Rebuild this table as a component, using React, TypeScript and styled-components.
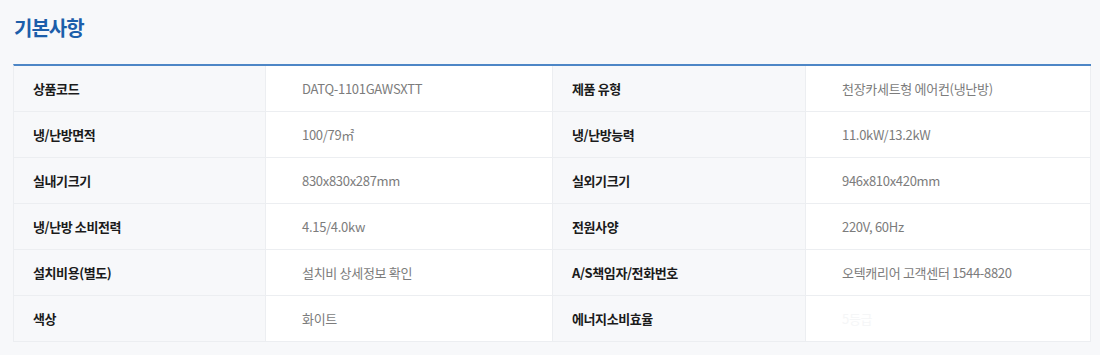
import styled, { createGlobalStyle } from "styled-components";

const GlobalStyle = createGlobalStyle`
  html, body {
    margin: 0;
    padding: 0;
    background: #f7f8fa;
    font-family: "Noto Sans CJK KR", "Noto Sans", sans-serif;
  }
`;

const Page = styled.div`
  padding: 11px 9px 0 13px;
`;

const Title = styled.h2`
  margin: 0 0 0 1px;
  height: 36px;
  line-height: 34px;
  font-size: 20px;
  font-weight: 700;
  letter-spacing: -1px;
  color: #1c5eaa;
`;

const Table = styled.div`
  margin-top: 17px;
  display: grid;
  grid-template-columns: 252px 287px 253px 1fr;
  border-top: 2px solid #4d86c6;
  border-left: 1px solid #eceef1;
  background: #fff;
`;

const Cell = styled.div<{ $label?: boolean }>`
  height: 46px;
  display: flex;
  align-items: center;
  box-sizing: border-box;
  border-bottom: 1px solid #eceef1;
  border-right: 1px solid #eceef1;
  padding-left: ${({ $label }) => ($label ? "19px" : "36px")};
  background: ${({ $label }) => ($label ? "#f7f8fa" : "#fff")};
  color: ${({ $label }) => ($label ? "#1b1b1b" : "#7c7c7c")};
  font-size: 13px;
  font-weight: ${({ $label }) => ($label ? 700 : 400)};
  letter-spacing: ${({ $label }) => ($label ? "-0.4px" : "-0.3px")};
  white-space: nowrap;
`;

const Faint = styled.span`
  color: #f5f6f7;
`;

type Spec = { label: string; value: React.ReactNode };

const rows: [Spec, Spec][] = [
  [
    { label: "상품코드", value: "DATQ-1101GAWSXTT" },
    { label: "제품 유형", value: "천장카세트형 에어컨(냉난방)" },
  ],
  [
    { label: "냉/난방면적", value: "100/79㎡" },
    { label: "냉/난방능력", value: "11.0kW/13.2kW" },
  ],
  [
    { label: "실내기크기", value: "830x830x287mm" },
    { label: "실외기크기", value: "946x810x420mm" },
  ],
  [
    { label: "냉/난방 소비전력", value: "4.15/4.0kw" },
    { label: "전원사양", value: "220V, 60Hz" },
  ],
  [
    { label: "설치비용(별도)", value: "설치비 상세정보 확인" },
    { label: "A/S책임자/전화번호", value: "오텍캐리어 고객센터 1544-8820" },
  ],
  [
    { label: "색상", value: "화이트" },
    { label: "에너지소비효율", value: <Faint>5등급</Faint> },
  ],
];

export default function App() {
  return (
    <>
      <GlobalStyle />
      <Page>
        <Title>기본사항</Title>
        <Table>
          {rows.map((pair) =>
            pair.map((spec) => [
              <Cell $label key={spec.label + "-l"}>
                {spec.label}
              </Cell>,
              <Cell key={spec.label + "-v"}>{spec.value}</Cell>,
            ])
          )}
        </Table>
      </Page>
    </>
  );
}
